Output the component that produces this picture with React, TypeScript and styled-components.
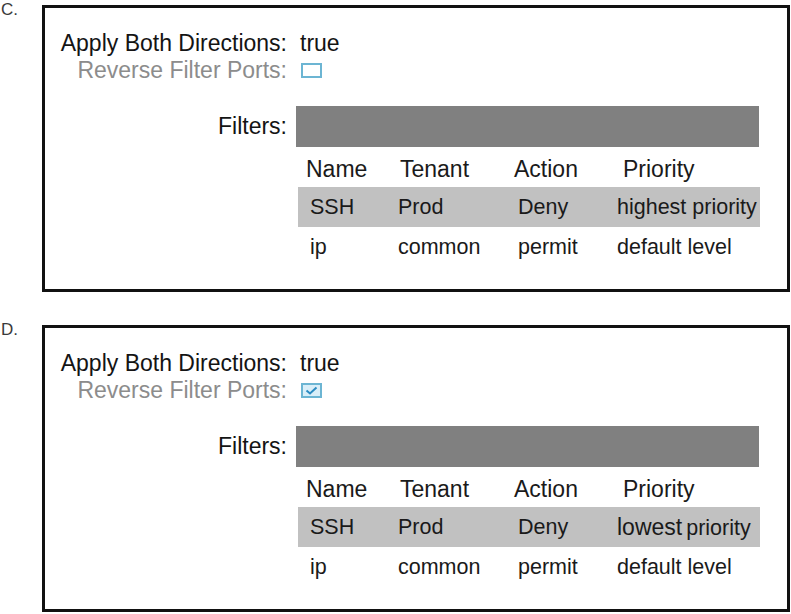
import React from 'react';
import styled, { createGlobalStyle } from 'styled-components';

const GlobalStyle = createGlobalStyle`
  html, body {
    margin: 0;
    padding: 0;
    background: #fff;
  }
  body {
    font-family: "Liberation Sans", Arial, sans-serif;
    color: #141414;
  }
`;

const Page = styled.div`
  display: flex;
  flex-direction: column;
  gap: 29px;
  padding-top: 1px;
  width: 791px;
`;

const Option = styled.section`
  display: flex;
  align-items: flex-start;
`;

const Letter = styled.div`
  width: 42px;
  flex: none;
  padding-left: 1px;
  box-sizing: border-box;
  font-size: 17px;
  line-height: 17px;
  color: #3a3a3a;
`;

const Panel = styled.div`
  margin-top: 4px;
  width: 748px;
  height: 287px;
  box-sizing: border-box;
  border: 3px solid #111;
  padding: 20px 0 0 12px;
`;

const Form = styled.div`
  display: grid;
  grid-template-columns: 230px 1fr;
  column-gap: 9px;
`;

const Label = styled.div<{ $muted?: boolean; $compact?: boolean }>`
  text-align: right;
  font-size: 23px;
  line-height: ${p => (p.$compact ? '24px' : '30px')};
  white-space: nowrap;
  color: ${p => (p.$muted ? '#8c8c8c' : '#141414')};
`;

const FiltersLabel = styled(Label)`
  margin-top: 29px;
`;

const Value = styled.div<{ $compact?: boolean }>`
  display: flex;
  align-items: center;
  height: ${p => (p.$compact ? '24px' : '30px')};
  padding-left: 4px;
  font-size: 23px;
`;

const Checkbox = styled.span<{ $checked: boolean }>`
  display: inline-flex;
  align-items: center;
  justify-content: center;
  width: 21px;
  height: 15px;
  margin-left: 1px;
  box-sizing: border-box;
  border: 2px solid #6cb5d3;
  background: ${p => (p.$checked ? '#d9eef8' : '#fff')};

  svg {
    width: 13px;
    height: 9px;
  }
`;

const FilterBlock = styled.div`
  margin-top: 24px;
  width: 464px;
`;

const Bar = styled.div`
  height: 41px;
  width: 463px;
  background: #808080;
`;

const Row = styled.div<{ $shaded?: boolean; $head?: boolean }>`
  display: grid;
  grid-template-columns: 98px 116px 102px 148px;
  align-items: center;
  height: 40px;
  box-sizing: border-box;
  padding-top: ${p => (p.$head ? '4px' : '0')};
  margin-left: ${p => (p.$shaded ? '2px' : '0')};
  width: ${p => (p.$shaded ? '462px' : '464px')};
  background: ${p => (p.$shaded ? '#c1c1c1' : 'transparent')};
`;

const HeadCell = styled.div<{ $pad: number }>`
  padding-left: ${p => p.$pad}px;
  font-size: 23px;
  color: #1a1a1a;
  white-space: nowrap;
`;

const Cell = styled.div<{ $pad: number }>`
  padding-left: ${p => p.$pad}px;
  font-size: 21.5px;
  color: #1a1a1a;
  white-space: nowrap;
`;

const Emphasis = styled.span`
  font-size: 23px;
  margin-right: 4px;
`;

const columns = [
  { title: 'Name', headPad: 10, pad: 14 },
  { title: 'Tenant', headPad: 6, pad: 4 },
  { title: 'Action', headPad: 4, pad: 8 },
  { title: 'Priority', headPad: 11, pad: 5 },
];

type Choice = { letter: string; checked: boolean; priority: React.ReactNode };

const choices: Choice[] = [
  { letter: 'C.', checked: false, priority: 'highest priority' },
  {
    letter: 'D.',
    checked: true,
    priority: (
      <>
        <Emphasis>lowest</Emphasis>priority
      </>
    ),
  },
];

const CheckMark = () => (
  <svg viewBox="0 0 13 9" fill="none">
    <path d="M1.5 4.5 L5 7.5 L11.5 1.5" stroke="#2b8bc2" strokeWidth="2" />
  </svg>
);

const App: React.FC = () => (
  <>
    <GlobalStyle />
    <Page>
      {choices.map(opt => {
        const rows: React.ReactNode[][] = [
          ['SSH', 'Prod', 'Deny', opt.priority],
          ['ip', 'common', 'permit', 'default level'],
        ];
        return (
          <Option key={opt.letter}>
            <Letter>{opt.letter}</Letter>
            <Panel>
              <Form>
                <Label>Apply Both Directions:</Label>
                <Value>true</Value>
                <Label $muted $compact>
                  Reverse Filter Ports:
                </Label>
                <Value $compact>
                  <Checkbox $checked={opt.checked}>{opt.checked && <CheckMark />}</Checkbox>
                </Value>
                <FiltersLabel>Filters:</FiltersLabel>
                <FilterBlock>
                  <Bar />
                  <Row $head>
                    {columns.map(c => (
                      <HeadCell key={c.title} $pad={c.headPad}>
                        {c.title}
                      </HeadCell>
                    ))}
                  </Row>
                  {rows.map((r, i) => (
                    <Row key={i} $shaded={i === 0}>
                      {r.map((v, j) => (
                        <Cell key={j} $pad={columns[j].pad - (i === 0 ? 2 : 0)}>
                          {v}
                        </Cell>
                      ))}
                    </Row>
                  ))}
                </FilterBlock>
              </Form>
            </Panel>
          </Option>
        );
      })}
    </Page>
  </>
);

export default App;
